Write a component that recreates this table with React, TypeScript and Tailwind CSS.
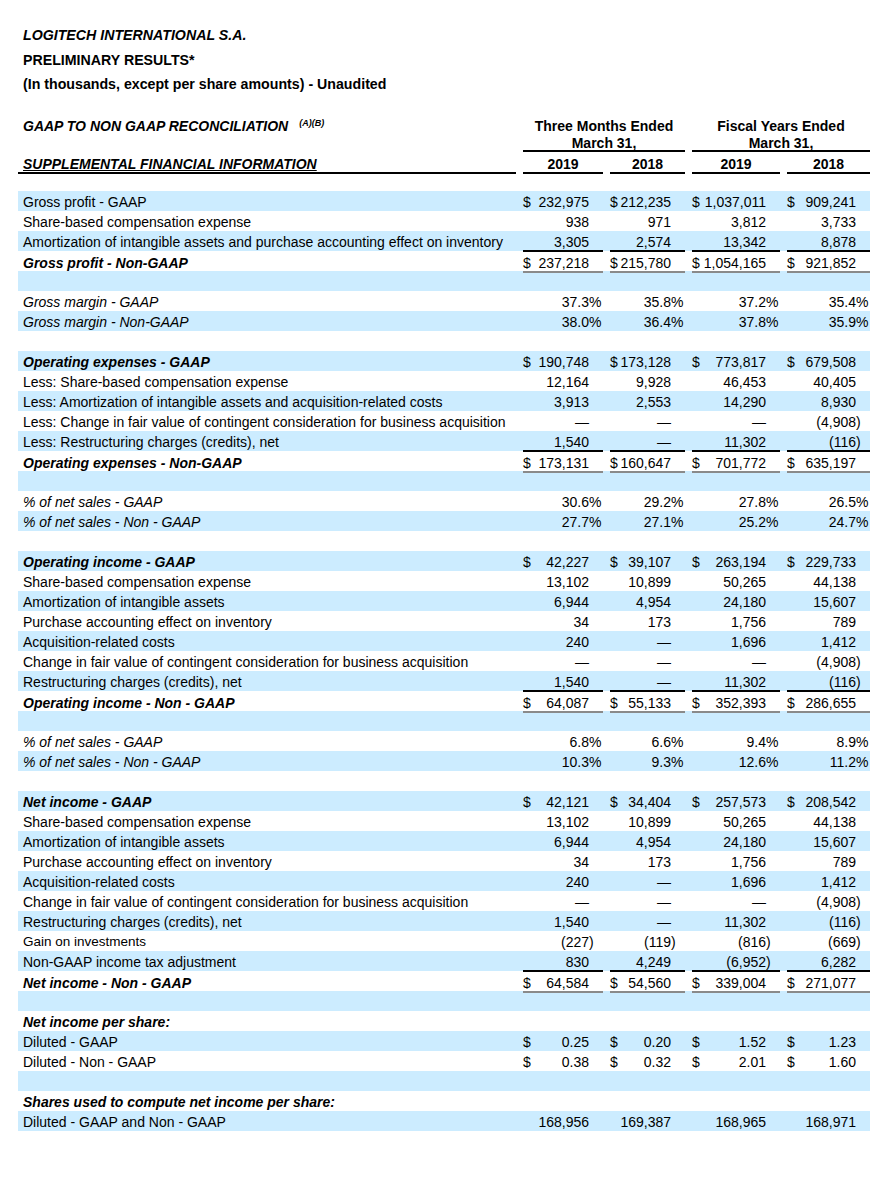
import React from "react";

type Row = {
  label?: string;
  v?: string[];
  kind?: "bi" | "i" | "sm";
  line?: boolean;
  total?: boolean;
};

const D = "—";

const rows: Row[] = [
  { label: "Gross profit - GAAP", v: ["$232,975", "$212,235", "$1,037,011", "$909,241"] },
  { label: "Share-based compensation expense", v: ["938", "971", "3,812", "3,733"] },
  {
    label: "Amortization of intangible assets and purchase accounting effect on inventory",
    v: ["3,305", "2,574", "13,342", "8,878"],
    line: true,
  },
  { label: "Gross profit - Non-GAAP", kind: "bi", total: true, v: ["$237,218", "$215,780", "$1,054,165", "$921,852"] },
  {},
  { label: "Gross margin - GAAP", kind: "i", v: ["37.3%", "35.8%", "37.2%", "35.4%"] },
  { label: "Gross margin - Non-GAAP", kind: "i", v: ["38.0%", "36.4%", "37.8%", "35.9%"] },
  {},
  { label: "Operating expenses - GAAP", kind: "bi", v: ["$190,748", "$173,128", "$773,817", "$679,508"] },
  { label: "Less: Share-based compensation expense", v: ["12,164", "9,928", "46,453", "40,405"] },
  { label: "Less: Amortization of intangible assets and acquisition-related costs", v: ["3,913", "2,553", "14,290", "8,930"] },
  { label: "Less: Change in fair value of contingent consideration for business acquisition", v: [D, D, D, "(4,908)"] },
  { label: "Less: Restructuring charges (credits), net", v: ["1,540", D, "11,302", "(116)"], line: true },
  { label: "Operating expenses - Non-GAAP", kind: "bi", total: true, v: ["$173,131", "$160,647", "$701,772", "$635,197"] },
  {},
  { label: "% of net sales - GAAP", kind: "i", v: ["30.6%", "29.2%", "27.8%", "26.5%"] },
  { label: "% of net sales - Non - GAAP", kind: "i", v: ["27.7%", "27.1%", "25.2%", "24.7%"] },
  {},
  { label: "Operating income - GAAP", kind: "bi", v: ["$42,227", "$39,107", "$263,194", "$229,733"] },
  { label: "Share-based compensation expense", v: ["13,102", "10,899", "50,265", "44,138"] },
  { label: "Amortization of intangible assets", v: ["6,944", "4,954", "24,180", "15,607"] },
  { label: "Purchase accounting effect on inventory", v: ["34", "173", "1,756", "789"] },
  { label: "Acquisition-related costs", v: ["240", D, "1,696", "1,412"] },
  { label: "Change in fair value of contingent consideration for business acquisition", v: [D, D, D, "(4,908)"] },
  { label: "Restructuring charges (credits), net", v: ["1,540", D, "11,302", "(116)"], line: true },
  { label: "Operating income - Non - GAAP", kind: "bi", total: true, v: ["$64,087", "$55,133", "$352,393", "$286,655"] },
  {},
  { label: "% of net sales - GAAP", kind: "i", v: ["6.8%", "6.6%", "9.4%", "8.9%"] },
  { label: "% of net sales - Non - GAAP", kind: "i", v: ["10.3%", "9.3%", "12.6%", "11.2%"] },
  {},
  { label: "Net income - GAAP", kind: "bi", v: ["$42,121", "$34,404", "$257,573", "$208,542"] },
  { label: "Share-based compensation expense", v: ["13,102", "10,899", "50,265", "44,138"] },
  { label: "Amortization of intangible assets", v: ["6,944", "4,954", "24,180", "15,607"] },
  { label: "Purchase accounting effect on inventory", v: ["34", "173", "1,756", "789"] },
  { label: "Acquisition-related costs", v: ["240", D, "1,696", "1,412"] },
  { label: "Change in fair value of contingent consideration for business acquisition", v: [D, D, D, "(4,908)"] },
  { label: "Restructuring charges (credits), net", v: ["1,540", D, "11,302", "(116)"] },
  { label: "Gain on investments", kind: "sm", v: ["(227)", "(119)", "(816)", "(669)"] },
  { label: "Non-GAAP income tax adjustment", v: ["830", "4,249", "(6,952)", "6,282"], line: true },
  { label: "Net income - Non - GAAP", kind: "bi", total: true, v: ["$64,584", "$54,560", "$339,004", "$271,077"] },
  {},
  { label: "Net income per share:", kind: "bi" },
  { label: "Diluted - GAAP", v: ["$0.25", "$0.20", "$1.52", "$1.23"] },
  { label: "Diluted - Non - GAAP", v: ["$0.38", "$0.32", "$2.01", "$1.60"] },
  {},
  { label: "Shares used to compute net income per share:", kind: "bi" },
  { label: "Diluted - GAAP and Non - GAAP", v: ["168,956", "169,387", "168,965", "168,971"] },
];

const cols = "grid grid-cols-[498px_80px_75px_88px_83px] gap-x-[7px]";

const Value = ({ v, line, total }: { v?: string; line?: boolean; total?: boolean }) => {
  const edge = line
    ? "shadow-[inset_0_-2px_0_#000]"
    : total
      ? "shadow-[inset_0_-2px_0_#8a8a8a]"
      : "";
  if (!v) return <div className={edge} />;
  let s = v;
  const dollar = s.startsWith("$");
  if (dollar) s = s.slice(1);
  let suffix = "";
  if (s.endsWith(")") || s.endsWith("%")) {
    suffix = s.slice(-1);
    s = s.slice(0, -1);
  }
  return (
    <div className={`flex justify-between pr-[14px] ${total ? "pt-[2px]" : "pt-[1px]"} ${edge}`}>
      <span>{dollar ? "$" : ""}</span>
      <span>
        {s}
        {suffix && <span className="inline-block w-0">{suffix}</span>}
      </span>
    </div>
  );
};

export default function App() {
  return (
    <div className="min-h-[1200px] bg-white text-black font-['Liberation_Sans',Arial,sans-serif] text-[14px]">
      <div className="ml-[18px] w-[852px] pt-[23px]">
        {/* title block */}
        <div className="pl-[5px] font-bold text-[14.2px]">
          <p className="h-[25px] leading-[25px] italic">LOGITECH INTERNATIONAL S.A.</p>
          <p className="h-[24px] leading-[24px]">PRELIMINARY RESULTS*</p>
          <p className="h-[24px] leading-[24px]">(In thousands, except per share amounts) - Unaudited</p>
        </div>

        {/* column headings */}
        <div className="mt-[19px] font-bold">
          <div className={`${cols} h-[20px] leading-[20px] pt-[1px]`}>
            <div className="pl-[5px] italic whitespace-nowrap">
              GAAP TO NON GAAP RECONCILIATION
              <span className="ml-[11px] align-top text-[9px] leading-[14px]">(A)(B)</span>
            </div>
            <div className="col-span-2 text-center">Three Months Ended</div>
            <div className="col-span-2 text-center">Fiscal Years Ended</div>
          </div>
          <div className={`${cols} h-[17px] leading-[17px]`}>
            <div />
            <div className="col-span-2 text-center shadow-[inset_0_-2px_0_#000]">March 31,</div>
            <div className="col-span-2 text-center shadow-[inset_0_-2px_0_#000]">March 31,</div>
          </div>
          <div className={`${cols} h-[21px] leading-[19px] pt-[3px]`}>
            <div className="pl-[5px] italic underline shadow-[inset_0_-2px_0_#000]">
              SUPPLEMENTAL FINANCIAL INFORMATION
            </div>
            {["2019", "2018", "2019", "2018"].map((y, i) => (
              <div key={i} className="text-center shadow-[inset_0_-2px_0_#000]">
                {y}
              </div>
            ))}
          </div>
          <div className="h-[18px]" />
        </div>

        {/* body */}
        {rows.map((r, i) => (
          <div
            key={i}
            className={`${cols} h-[20px] leading-[20px] ${i % 2 === 0 ? "bg-[#ccecff]" : "bg-white"}`}
          >
            <div
              className={`pl-[5px] whitespace-nowrap ${
                r.kind === "bi"
                  ? "font-bold italic"
                  : r.kind === "i"
                    ? "italic"
                    : r.kind === "sm"
                      ? "text-[13.5px]"
                      : ""
              } ${r.total ? "pt-[2px]" : "pt-[1px]"}`}
            >
              {r.label}
            </div>
            {[0, 1, 2, 3].map((c) => (
              <Value key={c} v={r.v?.[c]} line={r.line} total={r.total} />
            ))}
          </div>
        ))}
      </div>
    </div>
  );
}
